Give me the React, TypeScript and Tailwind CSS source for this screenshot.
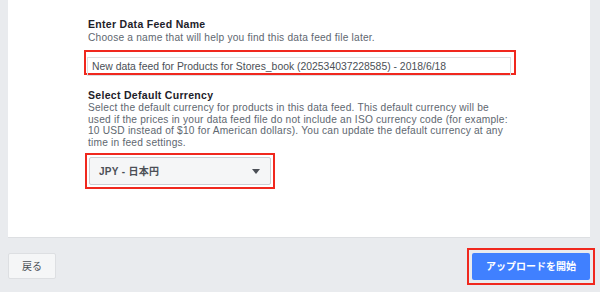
import { useState } from 'react'

const FONT = '"Liberation Sans", "Noto Sans CJK JP", sans-serif'

function App() {
  const [name, setName] = useState('New data feed for Products for Stores_book (202534037228585) - 2018/6/18')
  const [currency] = useState('JPY - 日本円')

  return (
    <div className="w-[600px] h-[292px] bg-[#e9ebee] overflow-hidden" style={{ fontFamily: FONT }}>
      <div className="mx-2 w-[582px] h-[238px] bg-white border-b border-[#dddfe2] pl-[80px] pt-[17px]">
        <div className="text-[10.5px] font-bold text-[#1d2129] leading-[14px] tracking-[0.3px]">Enter Data Feed Name</div>
        <div className="text-[10.2px] text-[#606770] leading-[13px] tracking-[0.2px]">
          Choose a name that will help you find this data feed file later.
        </div>
        <div className="mt-[6px] -ml-[4px] w-[432px] h-[25px] border-2 border-[#f0281e] p-[1px]">
          <input
            value={name}
            onChange={(e) => setName(e.target.value)}
            className="w-[424px] h-[19px] border border-[#dddfe2] px-[4px] text-[10.4px] text-[#4b4f56] outline-none"
            style={{ fontFamily: FONT }}
          />
        </div>
        <div className="mt-[13px] text-[10.5px] font-bold text-[#1d2129] leading-[14px] tracking-[0.3px]">Select Default Currency</div>
        <div className="w-[420px] text-[10.2px] text-[#606770] leading-[11.5px] tracking-[0.2px]">
          Select the default currency for products in this data feed. This default currency will be used if the prices
          in your data feed file do not include an ISO currency code (for example: 10 USD instead of $10 for American
          dollars). You can update the default currency at any time in feed settings.
        </div>
        <div className="mt-[5px] -ml-[3px] w-[190px] h-[36px] border-2 border-[#f0281e] p-[2px]">
          <button
            type="button"
            className="w-full h-full flex items-center justify-between bg-[#f5f6f7] border border-[#ccd0d5] rounded-[2px] pl-[9px] pr-[10px] text-[10px] font-bold text-[#4b4f56] tracking-[0.3px]"
          >
            <span>{currency}</span>
            <svg width="8" height="5" viewBox="0 0 8 5">
              <path d="M0 0h8L4 5z" fill="#4b4f56" />
            </svg>
          </button>
        </div>
      </div>
      <div className="flex items-start justify-between mt-[10px] pl-2 pr-[5px]">
        <button
          type="button"
          className="mt-[5px] w-[48px] h-[26px] bg-[#f5f6f7] border border-[#dddfe2] rounded-[2px] text-[10px] text-[#4b4f56]"
        >
          戻る
        </button>
        <div className="w-[128px] h-[37px] border-2 border-[#f0281e] p-[3px]">
          <button
            type="button"
            className="w-full h-full bg-[#4080ff] rounded-[2px] text-[10px] font-bold text-white"
          >
            アップロードを開始
          </button>
        </div>
      </div>
    </div>
  )
}

export default App
